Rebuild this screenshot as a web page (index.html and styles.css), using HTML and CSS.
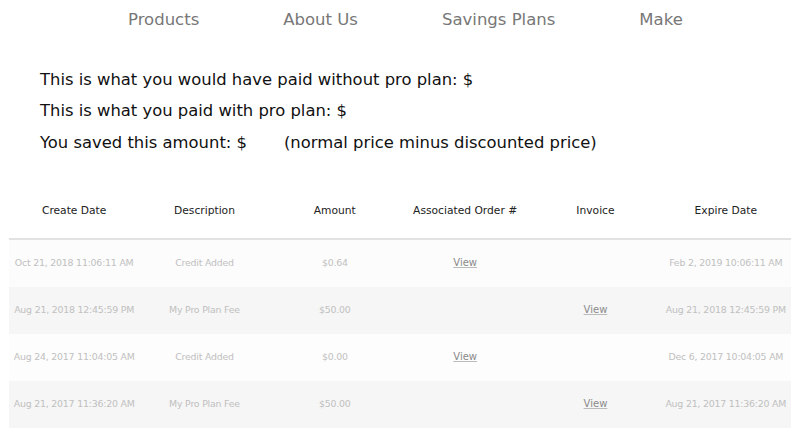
FILE: index.html
```html
<!DOCTYPE html>
<html>
<head>
<meta charset="utf-8">
<link rel="stylesheet" href="styles.css">
</head>
<body>
<nav class="nav">
  <a class="nav-item">Products</a>
  <a class="nav-item">About Us</a>
  <a class="nav-item">Savings Plans</a>
  <a class="nav-item">Make</a>
</nav>
<section class="summary">
  <p>This is what you would have paid without pro plan: $</p>
  <p>This is what you paid with pro plan: $</p>
  <p>You saved this amount: $<span class="note">(normal price minus discounted price)</span></p>
</section>
<table class="ledger">
  <thead>
    <tr>
      <th>Create Date</th>
      <th>Description</th>
      <th>Amount</th>
      <th>Associated Order #</th>
      <th>Invoice</th>
      <th>Expire Date</th>
    </tr>
  </thead>
  <tbody>
    <tr class="r1">
      <td>Oct 21, 2018 11:06:11 AM</td>
      <td>Credit Added</td>
      <td>$0.64</td>
      <td><a class="view">View</a></td>
      <td></td>
      <td>Feb 2, 2019 10:06:11 AM</td>
    </tr>
    <tr class="r2">
      <td>Aug 21, 2018 12:45:59 PM</td>
      <td>My Pro Plan Fee</td>
      <td>$50.00</td>
      <td></td>
      <td><a class="view">View</a></td>
      <td>Aug 21, 2018 12:45:59 PM</td>
    </tr>
    <tr class="r3">
      <td>Aug 24, 2017 11:04:05 AM</td>
      <td>Credit Added</td>
      <td>$0.00</td>
      <td><a class="view">View</a></td>
      <td></td>
      <td>Dec 6, 2017 10:04:05 AM</td>
    </tr>
    <tr class="r4">
      <td>Aug 21, 2017 11:36:20 AM</td>
      <td>My Pro Plan Fee</td>
      <td>$50.00</td>
      <td></td>
      <td><a class="view">View</a></td>
      <td>Aug 21, 2017 11:36:20 AM</td>
    </tr>
  </tbody>
</table>
</body>
</html>
```
FILE: styles.css
```css
html, body {
  margin: 0;
  padding: 0;
  background: #fff;
  font-family: "DejaVu Sans", "Liberation Sans", sans-serif;
}
.nav {
  display: flex;
  gap: 84px;
  padding-left: 128px;
  height: 38px;
  align-items: center;
}
.nav-item {
  color: #777;
  font-size: 16.5px;
  text-decoration: none;
}
.summary {
  padding: 26px 0 0 40px;
  height: 119px;
}
.summary p {
  margin: 0;
  font-size: 16.4px;
  line-height: 31.3px;
  color: #111;
}
.note {
  margin-left: 37px;
}
.ledger {
  margin: 0 9px;
  width: 782px;
  border-collapse: collapse;
  table-layout: fixed;
}
.ledger th {
  height: 55px;
  font-size: 10.7px;
  font-weight: normal;
  color: #222;
  border-bottom: 2px solid #e2e2e2;
  padding: 0;
}
.ledger td {
  height: 44px;
  padding: 0 0 3px;
  text-align: center;
  font-size: 9.4px;
  letter-spacing: -0.2px;
  white-space: nowrap;
  color: #c0c0c0;
}
.r1 { background: #fcfcfc; }
.r2 { background: #f6f6f6; }
.r3 { background: #fdfdfd; }
.r4 { background: #f6f6f6; }
.view {
  color: #8a8a8a;
  font-size: 10px;
  letter-spacing: 0;
  text-decoration: underline;
  text-decoration-color: #bbb;
}
```
